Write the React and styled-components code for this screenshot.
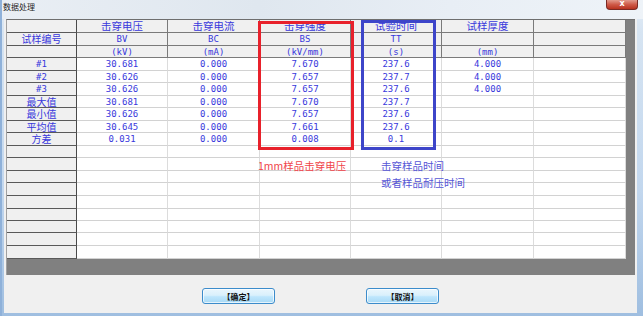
import React from "react";
import styled, { createGlobalStyle } from "styled-components";

const COLS = [70, 91, 92, 91, 91, 92, 92];
const ROWS = [13, 13, 12, 13, 12, 13, 12, 13, 12, 13, 12, 13, 12, 13, 13, 12, 12, 13, 13];

const HEAD = [
  ["", "击穿电压", "击穿电流", "击穿强度", "试验时间", "试样厚度", ""],
  ["试样编号", "BV", "BC", "BS", "TT", "", ""],
  ["", "(kV)", "(mA)", "(kV/mm)", "(s)", "(mm)", ""],
];

const DATA = [
  ["#1", "30.681", "0.000", "7.670", "237.6", "4.000", ""],
  ["#2", "30.626", "0.000", "7.657", "237.7", "4.000", ""],
  ["#3", "30.626", "0.000", "7.657", "237.6", "4.000", ""],
  ["最大值", "30.681", "0.000", "7.670", "237.7", "", ""],
  ["最小值", "30.626", "0.000", "7.657", "237.6", "", ""],
  ["平均值", "30.645", "0.000", "7.661", "237.6", "", ""],
  ["方差", "0.031", "0.000", "0.008", "0.1", "", ""],
];

const EMPTY_ROWS = 9;

const isCjk = (s) => /[\u4e00-\u9fff]/.test(s);

function App() {
  const body = [...DATA, ...Array.from({ length: EMPTY_ROWS }, () => Array(7).fill(""))];

  return (
    <>
      <GlobalStyle />
      <Window>
        <TitleBar>
          <Title>数据处理</Title>
          <CloseButton>x</CloseButton>
        </TitleBar>

        <Client>
          <GridPanel>
            <Table>
              {HEAD.map((row, r) =>
                row.map((text, c) => (
                  <Cell key={`h${r}-${c}`} $kind={c === 0 ? "fixed" : "head"} $cjk={isCjk(text)}>
                    {text}
                  </Cell>
                ))
              )}
              {body.map((row, r) =>
                row.map((text, c) => (
                  <Cell key={`d${r}-${c}`} $kind={c === 0 ? "fixed" : "data"} $cjk={isCjk(text)}>
                    {text}
                  </Cell>
                ))
              )}
            </Table>

            {/* annotations drawn over the grid */}
            <MarkBox $color="#e8212b" style={{ left: 251, top: 1, width: 96, height: 129 }} />
            <MarkBox $color="#3d45c9" style={{ left: 354, top: 0, width: 75, height: 130 }} />
            <Note $color="#f0444a" style={{ left: 251, top: 140 }}>1mm样品击穿电压</Note>
            <Note $color="#5656d6" style={{ left: 374, top: 140 }}>击穿样品时间</Note>
            <Note $color="#5656d6" style={{ left: 374, top: 157 }}>或者样品耐压时间</Note>
          </GridPanel>

          <ButtonRow>
            <DlgButton>【确定】</DlgButton>
            <DlgButton>【取消】</DlgButton>
          </ButtonRow>
        </Client>
      </Window>
    </>
  );
}

//styles
// ================================================================

const GlobalStyle = createGlobalStyle`
  html, body {
    margin: 0;
    padding: 0;
    overflow: hidden;
    background: #bcd3ea;
  }
`;

const Window = styled.div`
  width: 643px;
  height: 316px;
  display: flex;
  flex-direction: column;
  background: linear-gradient(180deg, #e4ecf5 0%, #d6e4f2 10%, #c2d7ee 60%, #9fbee0 100%);
  box-sizing: border-box;
  border-left: 2px solid #8fb1d9;
`;

const TitleBar = styled.div`
  height: 19px;
  display: flex;
  align-items: flex-start;
  justify-content: space-between;
  background: linear-gradient(90deg, #e9eef4 0%, #dfe7ef 40%, #e8eef5 70%, #eef3f8 100%);
`;

const Title = styled.div`
  font-family: "Noto Sans CJK SC", sans-serif;
  font-size: 8px;
  line-height: 8px;
  color: #1a1a1a;
  padding: 3px 0 0 1px;
  text-shadow: 0 0 3px #ffffff;
`;

const CloseButton = styled.div`
  width: 30px;
  height: 9px;
  margin-right: 5px;
  border: 1px solid #7a2a24;
  border-top: none;
  border-radius: 0 0 4px 4px;
  background: linear-gradient(180deg, #e29a8c 0%, #cf5a48 50%, #b8321f 100%);
  color: #ffffff;
  font-family: "DejaVu Sans", sans-serif;
  font-weight: bold;
  font-size: 8px;
  line-height: 8px;
  text-align: center;
`;

const Client = styled.div`
  flex: 1;
  margin: 0 6px 3px 2px;
  background: #f0f0f0;
  display: flex;
  flex-direction: column;
  padding: 0 2px;
`;

const GridPanel = styled.div`
  position: relative;
  height: 256px;
  background: #808080;
  border-left: 1px solid #a0a0a0;
  border-top: 1px solid #6e6e6e;
  box-sizing: border-box;
`;

const Table = styled.div`
  display: grid;
  grid-template-columns: ${COLS.map((w) => `${w}px`).join(" ")};
  grid-template-rows: ${ROWS.map((h) => `${h}px`).join(" ")};
  width: max-content;
`;

const Cell = styled.div`
  box-sizing: border-box;
  display: flex;
  align-items: center;
  justify-content: center;
  white-space: nowrap;
  color: #3838dc;
  font-family: ${({ $cjk }) =>
    $cjk ? `"Noto Sans CJK SC", sans-serif` : `"DejaVu Sans Mono", "Liberation Mono", monospace`};
  font-size: ${({ $cjk, $kind }) => ($cjk ? ($kind === "fixed" ? "10px" : "10.5px") : "9px")};
  line-height: 10px;
  background: ${({ $kind }) => ($kind === "data" ? "#ffffff" : "#f0f0f0")};
  border-right: 1px solid
    ${({ $kind }) => ($kind === "data" ? "#dcdcdc" : $kind === "fixed" ? "#4a4a4a" : "#7a7a7a")};
  border-bottom: 1px solid
    ${({ $kind }) => ($kind === "data" ? "#d2d2d2" : $kind === "fixed" ? "#5a5a5a" : "#7a7a7a")};
`;

const MarkBox = styled.div`
  position: absolute;
  box-sizing: border-box;
  border: 3px solid ${({ $color }) => $color};
  pointer-events: none;
`;

const Note = styled.div`
  position: absolute;
  font-family: "Noto Sans CJK SC", sans-serif;
  font-size: 10.5px;
  line-height: 12px;
  color: ${({ $color }) => $color};
  white-space: nowrap;
`;

const ButtonRow = styled.div`
  flex: 1;
  display: flex;
  justify-content: center;
  align-items: flex-start;
  gap: 91px;
  padding-top: 13px;
`;

const DlgButton = styled.div`
  width: 73px;
  height: 16px;
  box-sizing: border-box;
  border: 1px solid #3c8ccb;
  border-radius: 3px;
  background: linear-gradient(180deg, #eaf6fd 0%, #d9f0fc 45%, #bee6fd 55%, #a7d9f5 100%);
  box-shadow: inset 0 0 0 1px rgba(255, 255, 255, 0.7);
  display: flex;
  align-items: center;
  justify-content: center;
  font-family: "Noto Sans CJK SC", sans-serif;
  font-weight: bold;
  font-size: 8px;
  color: #111111;
`;

export default App;
